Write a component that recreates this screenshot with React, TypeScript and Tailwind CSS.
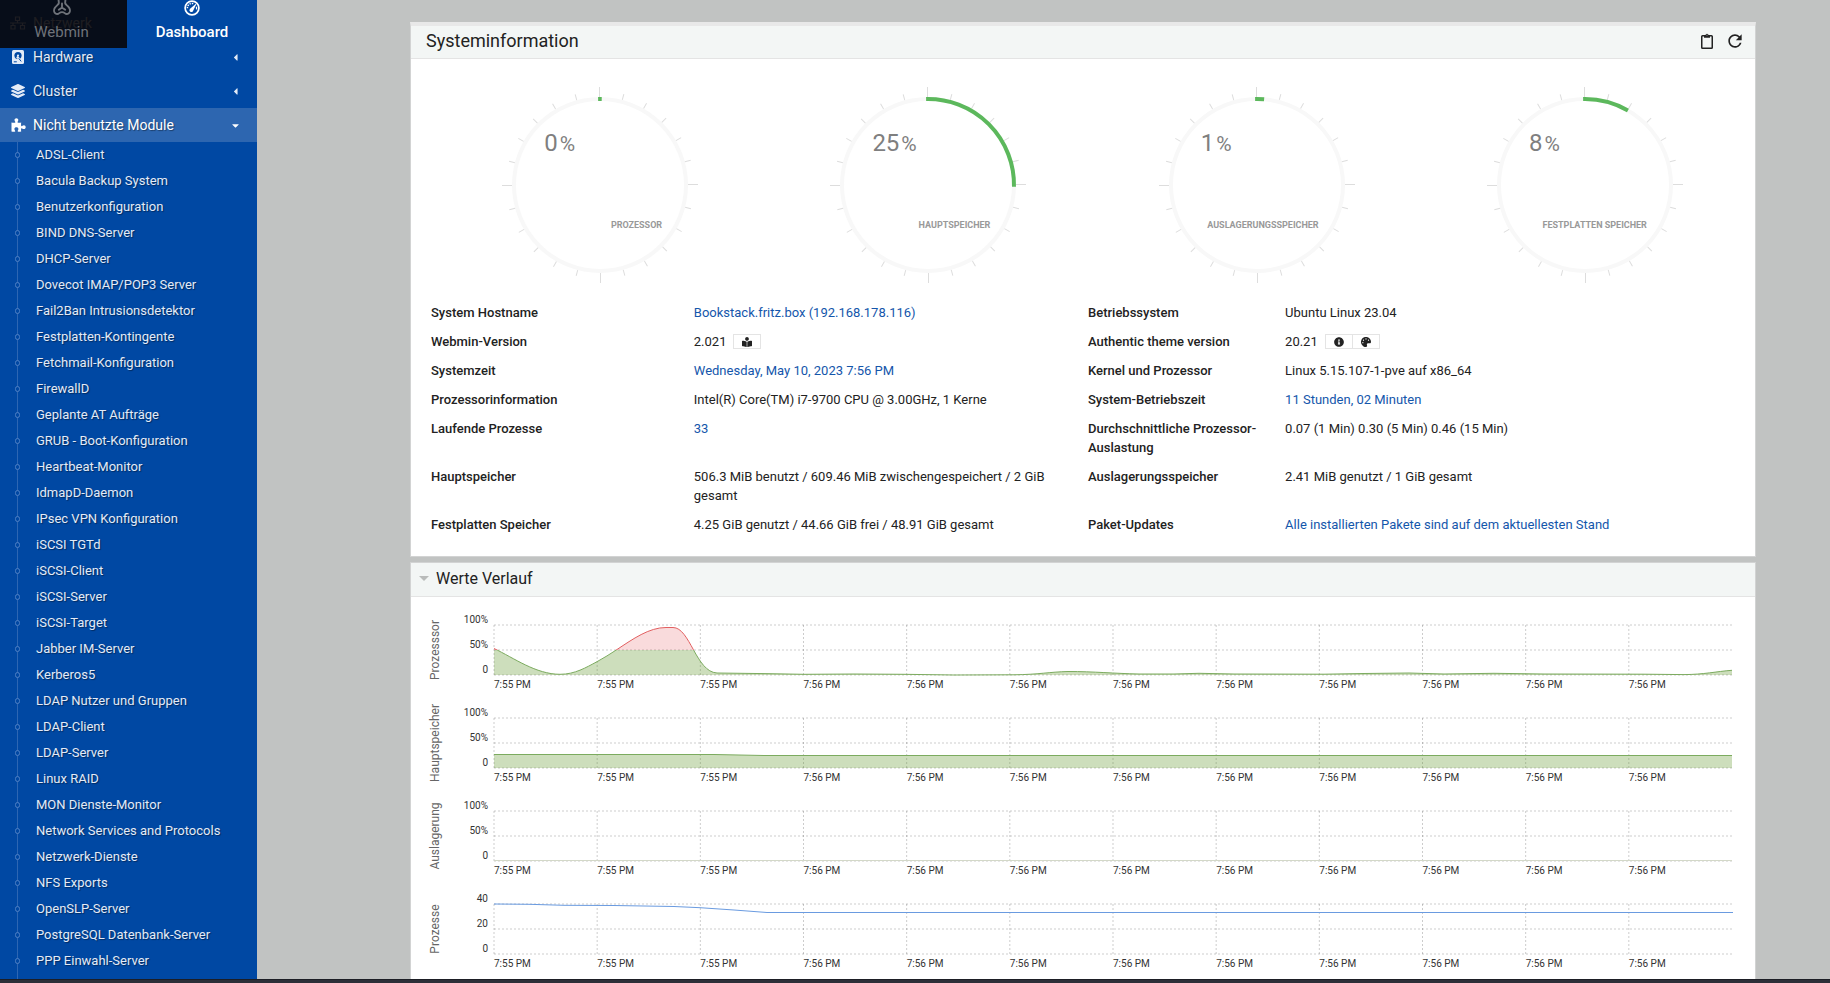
import { useId } from "react";
import { FaBookReader, FaCaretDown, FaCaretLeft, FaInfoCircle, FaLayerGroup, FaPalette } from "react-icons/fa";
import { MdRefresh } from "react-icons/md";

const modules = [
  "ADSL-Client", "Bacula Backup System", "Benutzerkonfiguration", "BIND DNS-Server", "DHCP-Server",
  "Dovecot IMAP/POP3 Server", "Fail2Ban Intrusionsdetektor", "Festplatten-Kontingente", "Fetchmail-Konfiguration",
  "FirewallD", "Geplante AT Aufträge", "GRUB - Boot-Konfiguration", "Heartbeat-Monitor", "IdmapD-Daemon",
  "IPsec VPN Konfiguration", "iSCSI TGTd", "iSCSI-Client", "iSCSI-Server", "iSCSI-Target", "Jabber IM-Server",
  "Kerberos5", "LDAP Nutzer und Gruppen", "LDAP-Client", "LDAP-Server", "Linux RAID", "MON Dienste-Monitor",
  "Network Services and Protocols", "Netzwerk-Dienste", "NFS Exports", "OpenSLP-Server",
  "PostgreSQL Datenbank-Server", "PPP Einwahl-Server",
];

function NetworkIcon() {
  return (
    <svg viewBox="0 0 16 14" className="h-[14px] w-4" fill="none" stroke="currentColor" strokeWidth="1.2">
      <path d="M5.5 1h4v3.5h-4zM1 9.5h4V13H1zM10.5 9.5h4V13h-4zM7.5 4.5V7M0 7h16M3 7v2.5M12.5 7v2.5" />
    </svg>
  );
}

function DiskIcon() {
  return (
    <svg viewBox="0 0 12 14" className="h-[14px] w-3">
      <rect width="12" height="14" rx="1.5" fill="currentColor" />
      <circle cx="6" cy="5.5" r="3.6" fill="#0048a3" />
      <circle cx="6" cy="5.5" r="1.1" fill="currentColor" />
      <path d="M5 6.5 9.2 11.6" stroke="currentColor" strokeWidth="2.2" />
      <path d="M6.8 8.4 9.2 11.4M1.8 11.8h3" stroke="#0048a3" strokeWidth="1" />
    </svg>
  );
}

function PuzzleIcon() {
  return (
    <svg viewBox="0 0 15 14" className="h-[14px] w-[15px]" fill="currentColor">
      <path d="M.5 4.600C2 4.900 3.800 5 4.300 4.600 4.700 4 3.500 3.300 3.500 2 3.500.9 4.300.2 5.400.2S7.300.9 7.300 2C7.300 3.300 6.200 4 6.600 4.600 7.200 5 9 4.900 10.200 4.600 10 6 9.900 7.800 10.400 8.200 11 8.500 11.600 7.300 12.900 7.300 14 7.300 14.700 8.100 14.700 9.200S14 11.100 12.900 11.100C11.600 11.100 11 9.900 10.400 10.300 9.900 10.800 10 12.300 10.200 13.600 9 13.800 7.400 13.900 6.800 13.500 6.300 13 7.400 12.300 7.400 11 7.400 9.900 6.500 9.300 5.400 9.300S3.400 9.900 3.400 11C3.400 12.300 4.600 13 4.200 13.500 3.700 13.900 1.800 13.800.5 13.600z" />
    </svg>
  );
}

function WebminIcon() {
  return (
    <svg viewBox="0 0 18 18" className="h-[18px] w-[18px]" fill="none" stroke="currentColor" strokeWidth="1.9" strokeLinejoin="round" strokeLinecap="round">
      <path d="M5.600 2C5.600.5 7-.4 9-.4s3.400.9 3.400 2.400c0 1.600-.6 2.600 0 3.800.7 1.300 2.500 2 3.700 4 1.300 2.200 1 4.700-.6 5.700-1.400.9-2.700.6-3.800-.4-.9-.8-1.700-1-2.700-1s-1.800.2-2.700 1c-1.100 1-2.400 1.300-3.800.4-1.600-1-1.900-3.500-.6-5.700 1.200-2 3-2.700 3.700-4 .6-1.200 0-2.200 0-3.800z" />
      <path d="M9 5.500v4M9 9.500l-3.200 2.300M9 9.500l3.200 2.300" />
    </svg>
  );
}

function GaugeIcon() {
  return (
    <svg viewBox="0 0 16 16" className="h-4 w-4" fill="none" stroke="currentColor">
      <circle cx="8" cy="8" r="6.9" strokeWidth="1.7" />
      <path d="M3.4 8.3A4.6 4.6 0 0 1 9.500 3.700" strokeWidth="1.5" strokeDasharray="1.4 1" />
      <path d="M5.800 9 13 2.700 8.900 11.200a1.900 1.900 0 0 1-3.100-2.200z" fill="currentColor" stroke="none" />
      <path d="M12.300 6.800q.500 1 .2 2.500" strokeWidth="1.2" />
    </svg>
  );
}

function ClipboardIcon() {
  return (
    <svg viewBox="0 0 12 16" className="h-4 w-3" fill="none" stroke="currentColor">
      <rect x=".75" y="2.75" width="10.5" height="12.5" rx=".8" strokeWidth="1.5" />
      <path d="M3 4.800V2.300h1.600a1.500 1.500 0 0 1 2.800 0H9v2.500z" fill="currentColor" stroke="none" />
      <circle cx="6" cy="2.2" r="1.5" fill="currentColor" stroke="none" />
      <circle cx="6" cy="2.1" r=".5" fill="#f3f6f5" stroke="none" />
    </svg>
  );
}

function MenuRow({ icon, label, open }: { icon: React.ReactNode; label: string; open?: boolean }) {
  return (
    <a href="#" className={`flex h-[34px] items-center pr-4 text-sm ${open ? "bg-[#2d66b0] text-white" : ""}`}>
      <span className="ml-[9px] flex w-[18px] justify-center">{icon}</span>
      <span className="ml-[6px] flex-1">{label}</span>
      {open ? <FaCaretDown size={11} /> : <FaCaretLeft size={11} />}
    </a>
  );
}

function Sidebar() {
  return (
    <aside className="relative w-[257px] shrink-0 overflow-hidden bg-[#0048a3] pt-[6px] text-[#e3ebf7] [text-shadow:1px_1px_1px_rgba(0,0,0,0.4)]">
      <nav>
        <MenuRow icon={<NetworkIcon />} label="Netzwerk" />
        <MenuRow icon={<DiskIcon />} label="Hardware" />
        <MenuRow icon={<FaLayerGroup size={14} />} label="Cluster" />
        <MenuRow icon={<PuzzleIcon />} label="Nicht benutzte Module" open />
        <ul className="relative ml-[17px] border-l border-[#2d66b3] pb-6">
          {modules.map((m) => (
            <li key={m} className="flex h-[26px] items-center">
              <span className="-ml-[3px] h-[6px] w-[5px] shrink-0 rounded-full border border-[#4f80c4] bg-[#0048a3]" />
              <a href="#" className="ml-4 whitespace-nowrap text-[13px]">{m}</a>
            </li>
          ))}
        </ul>
      </nav>
      <div className="absolute inset-x-0 top-0 flex h-12">
        <button className="flex w-[127px] flex-col items-center bg-[#08070a]/90 pr-1 text-[15px] text-[#6f737a]">
          <span className="-mt-[2px] flex h-6 items-start"><WebminIcon /></span>
          <span className="leading-5">Webmin</span>
        </button>
        <button className="flex flex-1 flex-col items-center bg-[#0048a3] text-[15px] font-medium text-white">
          <span className="flex h-[22px] items-start"><GaugeIcon /></span>
          <span className="leading-5">Dashboard</span>
        </button>
      </div>
    </aside>
  );
}

const ticks = Array.from({ length: 24 }, (_, i) => i);

function Gauge({ value, label }: { value: number; label: string }) {
  const angle = (value / 100) * 2 * Math.PI + 0.02;
  const start = -0.022;
  const point = (a: number) => `${100 + 86 * Math.sin(a)} ${100 - 86 * Math.cos(a)}`;
  return (
    <div className="flex justify-center">
      <div className="relative h-[200px] w-[200px]">
        <svg viewBox="0 0 200 200" className="h-full w-full" fill="none">
          <circle cx="100" cy="100" r="86" stroke="#f8f8f8" strokeWidth="4" />
          {ticks.map((t) => (
            <line key={t} x1="99.5" x2="99.5" y1={t % 6 === 0 ? 2 : 6} y2="12" stroke="#dddddd" transform={`rotate(${t * 15} 100 100)`} />
          ))}
          <path d={`M${point(start)}A86 86 0 0 1 ${point(angle)}`} stroke="#5cb85c" strokeWidth="4" />
        </svg>
        <div className="absolute left-11 top-[46px] flex items-baseline gap-[2px] text-[#7f7f7f]">
          <span className="text-2xl leading-6">{value}</span>
          <span className="text-[21px] leading-6">%</span>
        </div>
        <div className="absolute right-[38px] top-[134px] whitespace-nowrap text-[9px] font-bold leading-3 text-[#999999]">{label}</div>
      </div>
    </div>
  );
}

const link = "text-[#1456ab]";
const mini = "flex h-[15px] w-7 items-center justify-center border border-[#e4e4e4] text-[#222222]";

const rows: [string, React.ReactNode, string, React.ReactNode][] = [
  ["System Hostname", <a href="#" className={link}>Bookstack.fritz.box (192.168.178.116)</a>, "Betriebssystem", "Ubuntu Linux 23.04"],
  [
    "Webmin-Version",
    <span className="flex items-center gap-[7px]">2.021 <button aria-label="Änderungen" className={mini}><FaBookReader size={10} /></button></span>,
    "Authentic theme version",
    <span className="flex items-center gap-[7px]">20.21
      <span className="flex -space-x-px">
        <button aria-label="Info" className={mini}><FaInfoCircle size={10} /></button>
        <button aria-label="Theme" className={mini}><FaPalette size={10} /></button>
      </span>
    </span>,
  ],
  ["Systemzeit", <a href="#" className={link}>Wednesday, May 10, 2023 7:56 PM</a>, "Kernel und Prozessor", "Linux 5.15.107-1-pve auf x86_64"],
  ["Prozessorinformation", "Intel(R) Core(TM) i7-9700 CPU @ 3.00GHz, 1 Kerne", "System-Betriebszeit", <a href="#" className={link}>11 Stunden, 02 Minuten</a>],
  ["Laufende Prozesse", <a href="#" className={link}>33</a>, "Durchschnittliche Prozessor-Auslastung", "0.07 (1 Min) 0.30 (5 Min) 0.46 (15 Min)"],
  ["Hauptspeicher", "506.3 MiB benutzt / 609.46 MiB zwischengespeichert / 2 GiB gesamt", "Auslagerungsspeicher", "2.41 MiB genutzt / 1 GiB gesamt"],
  ["Festplatten Speicher", "4.25 GiB genutzt / 44.66 GiB frei / 48.91 GiB gesamt", "Paket-Updates", <a href="#" className={link}>Alle installierten Pakete sind auf dem aktuellesten Stand</a>],
];

function SystemInfo() {
  return (
    <section className="border border-t-4 border-[#d2d3d3] border-t-[#e8e8e8] bg-white">
      <header className="flex h-[33px] items-center border-b border-[#e4e4e4] bg-[#f3f6f5] pb-[2px] pl-[15px] pr-[10px]">
        <h2 className="flex-1 text-lg leading-6">Systeminformation</h2>
        <button aria-label="Kopieren" className="mr-3"><ClipboardIcon /></button>
        <button aria-label="Neu laden"><MdRefresh size={20} /></button>
      </header>
      <div className="grid grid-cols-4 pb-[13px] pl-[25px] pr-[6px] pt-[26px]">
        <Gauge value={0} label="PROZESSOR" />
        <Gauge value={25} label="HAUPTSPEICHER" />
        <Gauge value={1} label="AUSLAGERUNGSSPEICHER" />
        <Gauge value={8} label="FESTPLATTEN SPEICHER" />
      </div>
      <div className="px-[15px] pb-[17px]">
        <table className="w-full table-fixed text-left align-top text-[13px] leading-[19px]">
          <colgroup>
            <col className="w-[20%]" />
            <col className="w-[30%]" />
            <col className="w-[15%]" />
            <col className="w-[35%]" />
          </colgroup>
          <tbody>
            {rows.map((r) => (
              <tr key={r[0]} className="align-top">
                <th className="p-[5px] font-medium">{r[0]}</th>
                <td className="p-[5px]">{r[1]}</td>
                <th className="p-[5px] font-medium">{r[2]}</th>
                <td className="p-[5px]">{r[3]}</td>
              </tr>
            ))}
          </tbody>
        </table>
      </div>
    </section>
  );
}

const times = ["7:55 PM", "7:55 PM", "7:55 PM", ...Array.from({ length: 9 }, () => "7:56 PM")];

function Chart({ title, labels, line, color, fill, threshold }: {
  title: string; labels: string[]; line: string; color: string; fill?: string; threshold?: boolean;
}) {
  const id = useId();
  const area = `${line}V50H0Z`;
  return (
    <div className="flex h-[93px] pl-[18px] pr-[23px]">
      <div className="flex h-[50px] w-3 items-center justify-center">
        <span className="-rotate-90 whitespace-nowrap text-xs text-[#666666]">{title}</span>
      </div>
      <div className="-mt-[11px] flex w-[47px] flex-col gap-[13px] text-right text-[10px] leading-3 text-[#333333]">
        {labels.map((l) => <span key={l}>{l}</span>)}
      </div>
      <div className="ml-[6px] min-w-0 flex-1">
        <svg viewBox="0 0 1238 50" preserveAspectRatio="none" className="block h-[50px] w-full overflow-visible" fill="none">
          <defs>
            <clipPath id={`${id}high`}><rect x="0" y="-5" width="1240" height="30" /></clipPath>
            <clipPath id={`${id}low`}><rect x="0" y="25" width="1240" height="30" /></clipPath>
          </defs>
          <g stroke="#000000" strokeOpacity="0.2" strokeDasharray="2 2">
            {times.map((_, i) => <path key={i} d={`M${(i * 1238) / 12} 0v50`} vectorEffect="non-scaling-stroke" />)}
            {[0, 25, 50].map((y) => <path key={y} d={`M0 ${y}h1238`} vectorEffect="non-scaling-stroke" />)}
          </g>
          <g clipPath={threshold ? `url(#${id}low)` : undefined}>
            {fill && <path d={area} fill={fill} />}
            <path d={line} stroke={color} vectorEffect="non-scaling-stroke" />
          </g>
          {threshold && (
            <g clipPath={`url(#${id}high)`}>
              <path d={area} fill="#d70206" fillOpacity="0.14" />
              <path d={line} stroke="#e25f60" vectorEffect="non-scaling-stroke" />
            </g>
          )}
        </svg>
        <div className="grid grid-cols-12 pt-[3px] text-[10px] leading-[14px] text-[#333333]">
          {times.map((t, i) => <span key={i} className="whitespace-nowrap">{t}</span>)}
        </div>
      </div>
    </div>
  );
}

const green = "#7cab5f";
const greenFill = "rgba(89,145,33,0.3)";

function History() {
  return (
    <section className="border border-[#d2d3d3] bg-white">
      <header className="flex h-[34px] items-center border-b border-[#e4e4e4] bg-[#f3f6f5] pb-[2px] pl-2">
        <svg viewBox="0 0 10 5" className="h-[5px] w-[10px] fill-[#b9bbba]"><path d="M0 0h10L5 5z" /></svg>
        <h2 className="ml-[7px] text-base leading-6">Werte Verlauf</h2>
      </header>
      <div className="pt-7">
        <Chart
          title="Prozesssor" labels={["100%", "50%", "0"]} color={green} fill={greenFill} threshold
          line="M0 23.5C20 33 42 49.3 66 49.3C81 49.3 92 42.5 103 36.7C110 33 116 29 123 24.5C139 14 155 2.5 172 2.5L179 2.5C196 2.5 202 47 223 48L270 48.6L310 49.3L360 49L410 49.3L460 50L520 49.8C545 49.5 555 47 574 46.5C600 46.5 620 48.5 645 49L680 49L705 48.3L740 49L830 49.2L870 48.500L915 48L950 49L1000 48.3L1050 49L1150 49.2L1190 49.6C1210 49.5 1222 46.5 1238 45.3"
        />
        <Chart title="Hauptspeicher" labels={["100%", "50%", "0"]} color={green} fill={greenFill} line="M0 36.5H180L220 36.5L270 37.5H1238" />
        <Chart title="Auslagerung" labels={["100%", "50%", "0"]} color="#d3d8c8" line="M0 49.5H1238" />
        <Chart title="Prozesse" labels={["40", "20", "0"]} color="#6a9be0" line="M0 0L35 .3L70 1.3L120 1.5L180 2.5L206 3.7L240 6L273 8.5H1239" />
      </div>
    </section>
  );
}

export default function App() {
  return (
    <div className="relative flex h-screen overflow-hidden bg-[#c1c3c2] text-[#222222] [font-family:Roboto,sans-serif]">
      <Sidebar />
      <main className="flex min-w-0 flex-1 flex-col gap-[5px] pl-[153px] pr-[74px] pt-[22px]">
        <SystemInfo />
        <History />
      </main>
      <div className="absolute inset-x-0 bottom-0 h-1 border-t border-[#1d1e25] bg-[#2d2f38]" />
    </div>
  );
}
